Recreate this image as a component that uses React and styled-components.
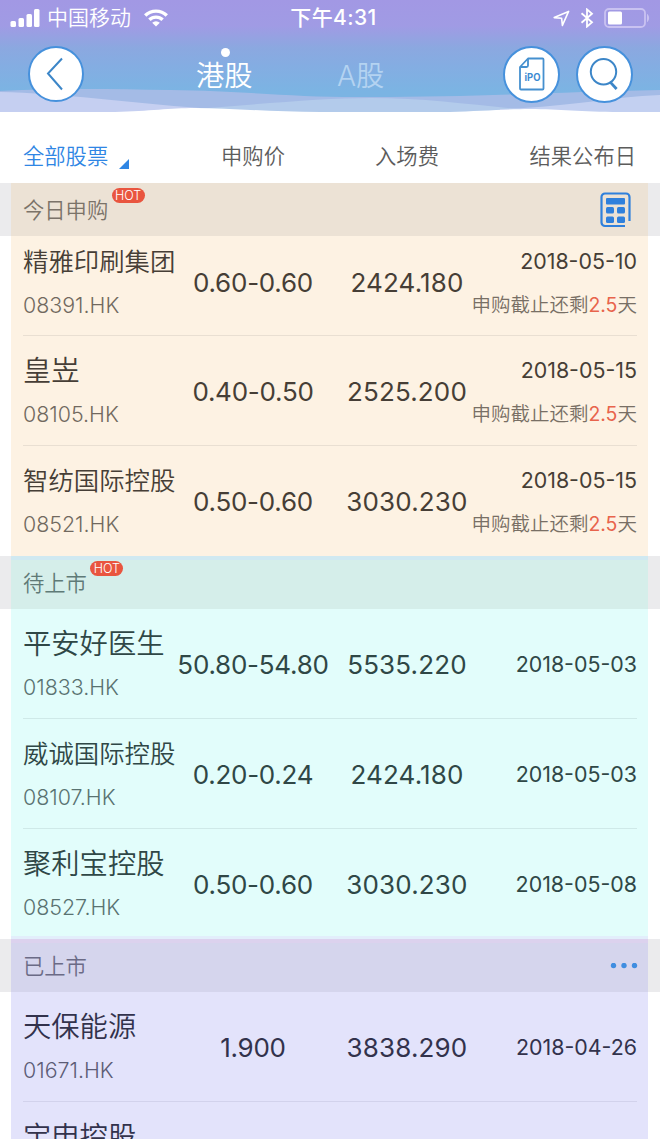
import React from "react";
import styled, { createGlobalStyle } from "styled-components";

const GlobalStyle = createGlobalStyle`
  * {
    box-sizing: border-box;
  }
  body {
    margin: 0;
    background: #fff;
    font-family: Inter, "Noto Sans CJK SC", sans-serif;
    color: #333;
  }
`;

const Page = styled.div`
  width: 660px;
  height: 1139px;
  overflow: hidden;
`;

const Header = styled.header`
  position: relative;
  height: 113px;
  background: linear-gradient(#a298e4 0, #a09be4 26px, #8ba8e0 48px, #84ade2 66px, #7bb4e3 92px);
  color: #fff;
`;

const Waves = styled.svg`
  position: absolute;
  left: 0;
  bottom: 0;
  display: block;
`;

const StatusBar = styled.div`
  position: relative;
  display: grid;
  grid-template-columns: 1fr auto 1fr;
  align-items: center;
  height: 36px;
  padding: 0 9px 0 10px;
`;

const StatusGroup = styled.div`
  display: flex;
  align-items: center;
  gap: ${(props) => props.gap || 0}px;
  justify-content: ${(props) => (props.end ? "flex-end" : "flex-start")};
`;

const Carrier = styled.span`
  margin: 0 13px 0 7px;
  font-size: 21px;
  font-weight: 350;
  line-height: 36px;
`;

const Clock = styled.span`
  padding-left: 6px;
  font-size: 21px;
  font-weight: 500;
  letter-spacing: 0.4px;
  line-height: 36px;
`;

const NavBar = styled.nav`
  position: relative;
  display: flex;
  align-items: center;
  height: 76px;
  padding: 0 27px 0 28px;
`;

const RoundButton = styled.button`
  display: flex;
  align-items: center;
  justify-content: center;
  width: ${(props) => props.size || 57}px;
  height: ${(props) => props.size || 57}px;
  margin: 0 0 0 ${(props) => props.gap || 0}px;
  padding: 0;
  border: 2px solid #4691dc;
  border-radius: 50%;
  background: #fff;
`;

const Tabs = styled.div`
  display: flex;
  flex: 1;
  margin-left: 112px;
`;

const Tab = styled.div`
  position: relative;
  width: 141px;
  font-size: 28.3px;
  font-weight: 350;
  line-height: 40px;
  padding-top: 4px;
  color: ${(props) => (props.active ? "#fff" : "#b4d3f1")};
`;

const ActiveDot = styled.i`
  position: absolute;
  left: 25px;
  top: -4px;
  width: 9px;
  height: 9px;
  border-radius: 50%;
  background: #fff;
`;

const columns = "156px 148px 160px minmax(0, 1fr)";

const ColumnHeader = styled.div`
  display: grid;
  grid-template-columns: ${columns};
  height: 70px;
  padding: 17px 24px 0 23px;
  font-size: 21.3px;
  font-weight: 350;
  line-height: 52px;
  color: #5c5c5c;
`;

const ColumnTitle = styled.div`
  display: flex;
  justify-content: ${(props) => props.align || "center"};
  white-space: nowrap;
  color: ${(props) => (props.selected ? "#2f86e4" : "inherit")};
`;

const Corner = styled.i`
  width: 0;
  height: 0;
  margin: 29px 0 0 11px;
  border-left: 10px solid transparent;
  border-bottom: 10px solid #2f86e4;
`;

const SectionHeader = styled.div`
  display: flex;
  align-items: center;
  justify-content: space-between;
  height: 53px;
  padding: 0 ${(props) => props.inset}px 0 12px;
  border: solid #ebebed;
  border-width: 0 12px 0 11px;
  background: ${(props) => props.tint};
  box-shadow: inset 0 ${(props) => (props.edge ? 4 : 0)}px ${(props) => props.edge || "transparent"};
  font-size: 21.3px;
  font-weight: 350;
  color: ${(props) => props.ink};
`;

const SectionTitle = styled.div`
  display: flex;
  line-height: 52px;
`;

const HotBadge = styled.span`
  width: 33px;
  height: 15px;
  margin: 4px 0 0 3.5px;
  border-radius: 8px;
  background: #e9553f;
  color: #fff;
  font-size: 12.5px;
  font-weight: 300;
  line-height: 15px;
  text-align: center;
`;

const SectionBody = styled.div`
  margin: 0 12px 0 11px;
  padding: 0 11px 0 12px;
  background: ${(props) => props.tint};
  box-shadow: inset 0 -3px ${(props) => props.foot || "transparent"};
  color: ${(props) => props.ink};
`;

const Row = styled.div`
  display: grid;
  grid-template-columns: ${columns};
  align-items: center;
  height: ${(props) => (props.tucked ? 100 : 110)}px;
  padding-bottom: ${(props) => (props.tucked ? 8 : 0)}px;
  border-bottom: 1px solid ${(props) => props.line};
  white-space: nowrap;

  &:last-child {
    border-bottom-color: transparent;
  }
`;

const Stock = styled.div`
  padding-top: 3px;
`;

const StockName = styled.div`
  height: 44px;
  font-size: ${(props) => (props.long ? 25.4 : 28.3)}px;
  font-weight: 350;
  line-height: 44px;
`;

const StockCode = styled.div`
  height: 42px;
  font-size: 21.4px;
  font-weight: 300;
  line-height: 43px;
  opacity: 0.76;
`;

const Figure = styled.div`
  justify-self: center;
  padding-top: 2px;
  font-size: 26px;
  letter-spacing: ${(props) => props.spacing || 0}px;
`;

const Result = styled.div`
  justify-self: end;
  padding-top: ${(props) => (props.open ? 2 : 0)}px;
  text-align: right;
  font-size: 21.4px;
`;

const ResultDate = styled.div`
  height: 44px;
  line-height: 44px;
`;

const Deadline = styled.div`
  height: 44px;
  font-size: 19.5px;
  font-weight: 350;
  line-height: 44px;
  color: #786f65;

  em {
    font-style: normal;
    font-weight: 400;
    color: #e8644c;
  }
`;

const SignalIcon = () => (
  <svg width="30" height="18" viewBox="0 0 30 18" fill="#fff">
    <rect x="0.5" y="12" width="5.5" height="6" rx="1.5" />
    <rect x="8.5" y="9" width="5.5" height="9" rx="1.5" />
    <rect x="16.5" y="5" width="5.5" height="13" rx="1.5" />
    <rect x="24" y="0" width="5.5" height="18" rx="1.5" />
  </svg>
);

const WifiIcon = () => (
  <svg width="24" height="18" viewBox="0 0 24 18" fill="none" stroke="#fff" strokeWidth="3.4">
    <path d="M1.2 6.5a15.5 15.5 0 0 1 21.6 0" />
    <path d="M5.4 10.8a9.4 9.4 0 0 1 13.2 0" />
    <path d="M12 17.6l-3.8-3.9a5.4 5.4 0 0 1 7.6 0z" fill="#fff" stroke="none" />
  </svg>
);

const LocationIcon = () => (
  <svg width="17" height="17" viewBox="0 0 17 17" fill="none" stroke="#fff" strokeWidth="1.6" strokeLinejoin="round">
    <path d="M1.2 7.6L15.6 1.4 9.4 15.4 8.6 8.2z" />
  </svg>
);

const BluetoothIcon = () => (
  <svg width="14" height="20" viewBox="0 0 14 20" fill="none" stroke="#fff" strokeWidth="1.8">
    <path d="M1.5 5.3l10.5 9L7 18.6V1.4l5 4.3-10.5 9" />
  </svg>
);

const BatteryIcon = () => (
  <svg width="47" height="20" viewBox="0 0 47 20">
    <rect x="1" y="1" width="40" height="18" rx="4" fill="none" stroke="#c9c2f1" strokeWidth="1.8" />
    <rect x="4" y="3.5" width="14" height="13" rx="1.5" fill="#fff" />
    <path d="M43.5 6.5q2.5 3.5 0 7z" fill="#c9c2f1" stroke="#c9c2f1" />
  </svg>
);

const BackIcon = () => (
  <svg width="20" height="34" viewBox="0 0 20 34" fill="none" stroke="#3c86c8" strokeWidth="2">
    <path d="M16 1.5L2 16.5 16 32.5" />
  </svg>
);

const IpoIcon = () => (
  <svg width="28" height="34" viewBox="0 0 28 34" fill="none" stroke="#4590cf" strokeWidth="1.8">
    <path d="M10 1.5H24.5a1 1 0 0 1 1 1V31.5a1 1 0 0 1-1 1H3a1 1 0 0 1-1-1V10z" strokeLinejoin="round" />
    <path d="M10 2V8.5a1.5 1.5 0 0 1-1.5 1.5H2.5" />
    <text
      x="6.5"
      y="23.5"
      fill="#3d8bd2"
      stroke="none"
      fontFamily="Inter"
      fontSize="10"
      fontWeight="700"
      textLength="16"
      lengthAdjust="spacingAndGlyphs"
    >
      iPO
    </text>
  </svg>
);

const SearchIcon = () => (
  <svg width="32" height="34" viewBox="0 0 32 34" fill="none" stroke="#3c86c8" strokeWidth="2">
    <circle cx="14.5" cy="14.7" r="12.7" />
    <path d="M20.8 24.6L27.6 32" strokeWidth="2.8" />
  </svg>
);

const CalculatorIcon = () => (
  <svg width="32" height="36" viewBox="0 0 32 36" fill="none" stroke="#2f80dc" strokeWidth="2.2">
    <path d="M25 34H5a3.5 3.5 0 0 1-3.5-3.5V5A3.5 3.5 0 0 1 5 1.5H26A3.5 3.5 0 0 1 29.5 5V29" />
    <g fill="#2f80dc" stroke="none">
      <rect x="6" y="6" width="19" height="6.5" rx="1" />
      <rect x="6" y="15" width="8" height="6.5" rx="1.5" />
      <rect x="17" y="15" width="8" height="6.5" rx="1.5" />
      <rect x="6" y="24.5" width="8" height="6.5" rx="1.5" />
      <rect x="17" y="24.5" width="8" height="6.5" rx="1.5" />
    </g>
  </svg>
);

const MoreIcon = () => (
  <svg width="28" height="6" viewBox="0 0 28 6" fill="#3f8de0">
    <circle cx="3.5" cy="2.5" r="2.7" />
    <circle cx="14" cy="2.5" r="2.7" />
    <circle cx="24.5" cy="2.5" r="2.7" />
  </svg>
);

const sections = [
  {
    title: "今日申购",
    hot: true,
    action: <CalculatorIcon />,
    inset: 16,
    head: "#ece2d5",
    body: "#fdf2e3",
    line: "#e9dfd2",
    ink: "#463e36",
    muted: "#7b7369",
    tucked: true,
    rows: [
      ["精雅印刷集团", "08391.HK", "0.60-0.60", "2424.180", "2018-05-10", "2.5"],
      ["皇岦", "08105.HK", "0.40-0.50", "2525.200", "2018-05-15", "2.5"],
      ["智纺国际控股", "08521.HK", "0.50-0.60", "3030.230", "2018-05-15", "2.5"],
    ],
  },
  {
    title: "待上市",
    hot: true,
    edge: "#d0e9f1",
    head: "#d5eeea",
    body: "#e2fdfb",
    foot: "#e2eefb",
    line: "#cfe9e8",
    ink: "#2f4746",
    muted: "#5f7a77",
    rows: [
      ["平安好医生", "01833.HK", "50.80-54.80", "5535.220", "2018-05-03"],
      ["威诚国际控股", "08107.HK", "0.20-0.24", "2424.180", "2018-05-03"],
      ["聚利宝控股", "08527.HK", "0.50-0.60", "3030.230", "2018-05-08"],
    ],
  },
  {
    title: "已上市",
    action: <MoreIcon />,
    inset: 10,
    edge: "#dcd2ee",
    head: "#d5d5ed",
    body: "#e3e3fb",
    line: "#d2d2ec",
    ink: "#32324c",
    muted: "#6b6b86",
    rows: [
      ["天保能源", "01671.HK", "1.900", "3838.290", "2018-04-26"],
      ["宝申控股"],
    ],
  },
];

const StockRow = ({ data, line, tucked }) => {
  const [name, code, price, fee, date, days] = data;
  return (
    <Row line={line} tucked={tucked}>
      <Stock>
        <StockName long={name.length > 5}>{name}</StockName>
        <StockCode>{code}</StockCode>
      </Stock>
      <Figure spacing={-0.25}>{price}</Figure>
      <Figure spacing={0.15}>{fee}</Figure>
      <Result open={Boolean(days)}>
        <ResultDate>{date}</ResultDate>
        {days && (
          <Deadline>
            申购截止还剩<em>{days}</em>天
          </Deadline>
        )}
      </Result>
    </Row>
  );
};

const App = () => {
  return (
    <Page>
      <GlobalStyle />
      <Header>
        <Waves width="660" height="26" viewBox="0 0 660 26">
          <path d="M0 4C60 1 110 2 170 3C250 4 300 11 370 10C480 10 560 5 660 3V26H0z" fill="#a4bbe6" />
          <path d="M180 23C250 18 320 11 370 11C430 11 480 19 530 23V26H180z" fill="#b3cbeb" />
          <path d="M0 5C60 6 130 16 200 21V26H0z" fill="#c5cff1" />
          <path d="M500 22C570 20 610 10 660 8V26H500z" fill="#c3d0f1" />
          <path d="M0 25H115C150 24 170 21 195 21C230 21 270 25 320 25H450C480 24 510 22 530 22C560 22 580 25 620 25H660V26H0z" fill="#fff" />
        </Waves>
        <StatusBar>
          <StatusGroup>
            <SignalIcon />
            <Carrier>中国移动</Carrier>
            <WifiIcon />
          </StatusGroup>
          <Clock>下午4:31</Clock>
          <StatusGroup end gap={10}>
            <LocationIcon />
            <BluetoothIcon />
            <BatteryIcon />
          </StatusGroup>
        </StatusBar>
        <NavBar>
          <RoundButton size={56}>
            <BackIcon />
          </RoundButton>
          <Tabs>
            <Tab active>
              <ActiveDot />
              港股
            </Tab>
            <Tab>A股</Tab>
          </Tabs>
          <RoundButton>
            <IpoIcon />
          </RoundButton>
          <RoundButton gap={16}>
            <SearchIcon />
          </RoundButton>
        </NavBar>
      </Header>
      <ColumnHeader>
        <ColumnTitle align="flex-start" selected>
          全部股票
          <Corner />
        </ColumnTitle>
        <ColumnTitle>申购价</ColumnTitle>
        <ColumnTitle>入场费</ColumnTitle>
        <ColumnTitle align="flex-end">结果公布日</ColumnTitle>
      </ColumnHeader>
      {sections.map((section) => (
        <section key={section.title}>
          <SectionHeader tint={section.head} ink={section.muted} edge={section.edge} inset={section.inset || 0}>
            <SectionTitle>
              {section.title}
              {section.hot && <HotBadge>HOT</HotBadge>}
            </SectionTitle>
            {section.action}
          </SectionHeader>
          <SectionBody tint={section.body} ink={section.ink} foot={section.foot}>
            {section.rows.map((row, i) => (
              <StockRow key={row[0]} data={row} line={section.line} tucked={section.tucked && i === 0} />
            ))}
          </SectionBody>
        </section>
      ))}
    </Page>
  );
};

export default App;
